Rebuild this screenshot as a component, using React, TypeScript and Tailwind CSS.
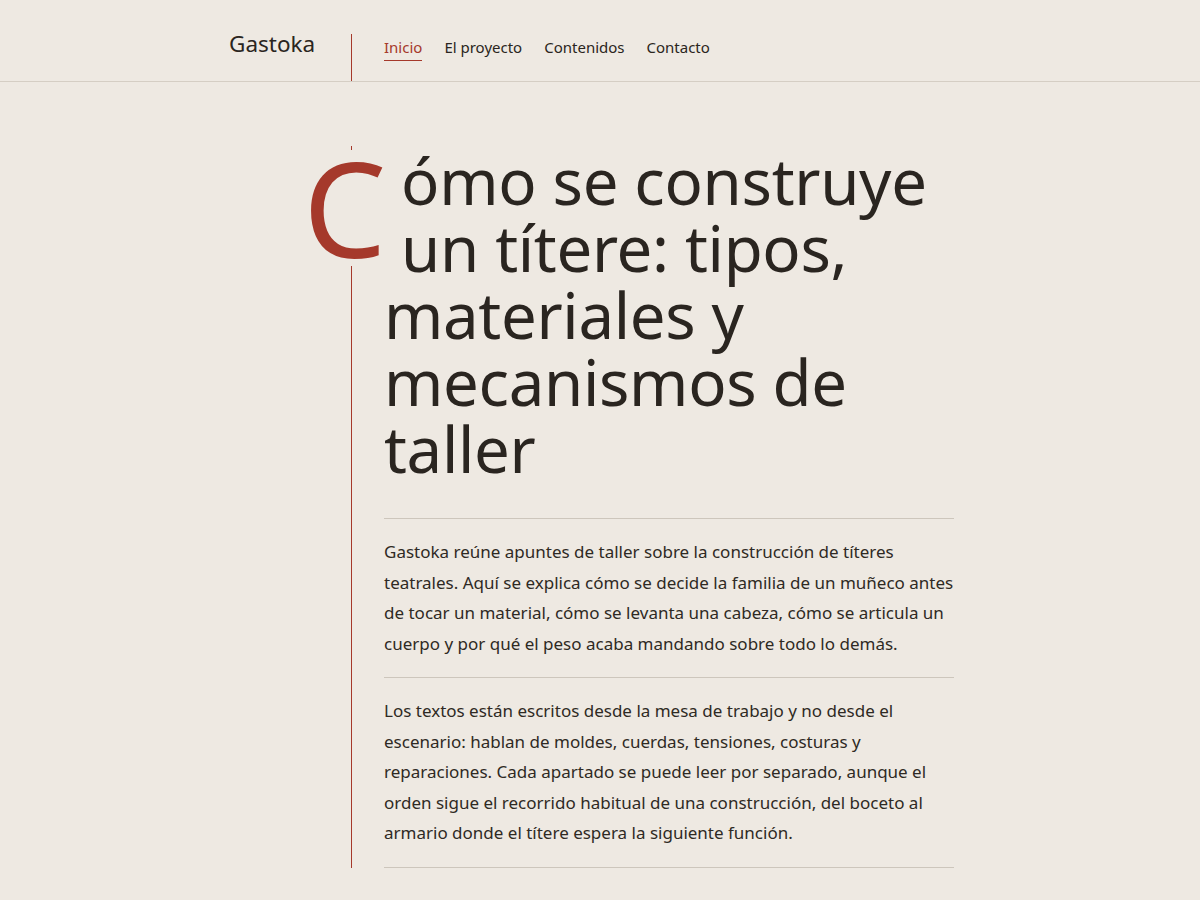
import React from "react";

export default function App() {
  const nav = ["Inicio", "El proyecto", "Contenidos", "Contacto"];
  return (
    <div
      className="min-h-screen bg-[#eee9e2] text-[#2a2520]"
      style={{ fontFamily: '"Noto Sans", "Open Sans", sans-serif' }}
    >
      <header className="border-b border-[#d5cec4]">
        <div className="mx-auto flex h-[81px] w-[742px]">
          <div className="w-[122px] shrink-0 pt-[33px] text-[22.5px] leading-[22px] text-[#2a2520]">
            Gastoka
          </div>
          <nav className="mt-[34px] flex h-[47px] gap-[22px] border-l border-[#a5392b] pl-8 pt-[2px] text-[15px]">
            {nav.map((n, i) => (
              <a
                key={n}
                className={
                  i === 0
                    ? "h-[25px] border-b border-[#a5392b] pb-[1px] leading-[23px] text-[#a5392b]"
                    : "h-[25px] leading-[23px] text-[#2a2520]"
                }
              >
                {n}
              </a>
            ))}
          </nav>
        </div>
      </header>

      <main className="mx-auto w-[742px]">
        <article className="ml-[122px] mt-[64px] border-l border-[#a5392b] pl-8 pt-[1px]">
          <div className="w-[570px]">
            <h1 className="mb-[36px] text-[63.5px] font-normal leading-[67px] tracking-[-0.005em] text-[#2a2520]">
              <span className="float-left -ml-[81px] mr-[15px] mt-[3px] h-[116px] bg-[#eee9e2] text-[132px] leading-[114px] text-[#a5392b]">
                C
              </span>
              ómo se construye un títere: tipos, materiales y mecanismos de taller
            </h1>
            <p className="border-y border-[#cdc6bc] pb-[18px] pt-[18px] text-[17px] leading-[30.5px] text-[#2f2a24]">
              Gastoka reúne apuntes de taller sobre la construcción de títeres
              teatrales. Aquí se explica cómo se decide la familia de un muñeco
              antes de tocar un material, cómo se levanta una cabeza, cómo se
              articula un cuerpo y por qué el peso acaba mandando sobre todo lo
              demás.
            </p>
            <p className="border-b border-[#cdc6bc] pb-[18px] pt-[18px] text-[17px] leading-[30.5px] text-[#2f2a24]">
              Los textos están escritos desde la mesa de trabajo y no desde el
              escenario: hablan de moldes, cuerdas, tensiones, costuras y
              reparaciones. Cada apartado se puede leer por separado, aunque el
              orden sigue el recorrido habitual de una construcción, del boceto
              al armario donde el títere espera la siguiente función.
            </p>
          </div>
        </article>
      </main>
    </div>
  );
}
